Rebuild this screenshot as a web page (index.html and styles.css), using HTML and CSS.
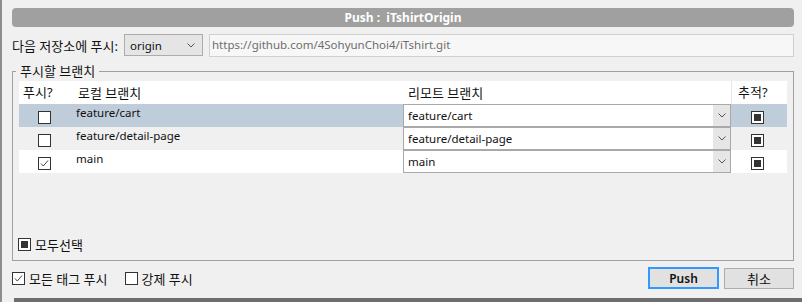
FILE: index.html
```html
<!DOCTYPE html>
<html lang="ko">

<head>
    <meta charset="UTF-8">
    <title>Push</title>
    <link rel="stylesheet" href="styles.css">
</head>

<body>
    <div class="dialog">
        <div class="title-bar">Push :&nbsp; iTshirtOrigin</div>

        <div class="remote-row">
            <span class="remote-label ko">다음 저장소에 푸시:</span>
            <div class="origin-select">
                <span>origin</span>
                <svg class="chevron" width="8" height="5" viewBox="0 0 8 5"><path d="M0.5 0.5 L4 4 L7.5 0.5" fill="none" stroke="#555" stroke-width="1"/></svg>
            </div>
            <div class="url-box">https://github.com/4SohyunChoi4/iTshirt.git</div>
        </div>

        <fieldset class="branches">
            <legend class="ko">푸시할 브랜치</legend>
            <div class="branch-table">
                <div class="branch-row head">
                    <div class="cell push-col ko">푸시?</div>
                    <div class="cell local-col ko">로컬 브랜치</div>
                    <div class="cell remote-col ko">리모트 브랜치</div>
                    <div class="cell track-col ko">추적?</div>
                </div>
                <div class="branch-row selected">
                    <div class="cell push-col"><span class="box"></span></div>
                    <div class="cell local-col">feature/cart</div>
                    <div class="cell remote-col">
                        <div class="combo"><span class="combo-text">feature/cart</span><span class="combo-btn"><svg width="8" height="5" viewBox="0 0 8 5"><path d="M0.5 0.5 L4 4 L7.5 0.5" fill="none" stroke="#555" stroke-width="1"/></svg></span></div>
                    </div>
                    <div class="cell track-col"><span class="box mixed"></span></div>
                </div>
                <div class="branch-row">
                    <div class="cell push-col"><span class="box"></span></div>
                    <div class="cell local-col">feature/detail-page</div>
                    <div class="cell remote-col">
                        <div class="combo"><span class="combo-text">feature/detail-page</span><span class="combo-btn"><svg width="8" height="5" viewBox="0 0 8 5"><path d="M0.5 0.5 L4 4 L7.5 0.5" fill="none" stroke="#555" stroke-width="1"/></svg></span></div>
                    </div>
                    <div class="cell track-col"><span class="box mixed"></span></div>
                </div>
                <div class="branch-row white">
                    <div class="cell push-col"><span class="box"><svg width="11" height="11" viewBox="0 0 11 11"><path d="M2 5.5 L4.3 8 L9 2.5" fill="none" stroke="#444" stroke-width="1"/></svg></span></div>
                    <div class="cell local-col">main</div>
                    <div class="cell remote-col">
                        <div class="combo"><span class="combo-text">main</span><span class="combo-btn"><svg width="8" height="5" viewBox="0 0 8 5"><path d="M0.5 0.5 L4 4 L7.5 0.5" fill="none" stroke="#555" stroke-width="1"/></svg></span></div>
                    </div>
                    <div class="cell track-col"><span class="box mixed"></span></div>
                </div>
            </div>
            <label class="select-all"><span class="box mixed"></span><span class="ko">모두선택</span></label>
        </fieldset>

        <div class="footer">
            <div class="options">
                <label class="option"><span class="box"><svg width="11" height="11" viewBox="0 0 11 11"><path d="M2 5.5 L4.3 8 L9 2.5" fill="none" stroke="#444" stroke-width="1"/></svg></span><span class="ko">모든 태그 푸시</span></label>
                <label class="option force"><span class="box"></span><span class="ko">강제 푸시</span></label>
            </div>
            <div class="buttons">
                <button class="btn primary">Push</button>
                <button class="btn ko">취소</button>
            </div>
        </div>
    </div>
    <div class="edge"></div>
</body>

</html>
```

FILE: styles.css
```css
* {
    margin: 0;
    padding: 0;
    box-sizing: border-box;
}

html,
body {
    width: 802px;
    height: 302px;
    overflow: hidden;
}

body {
    display: flex;
    flex-direction: column;
    background-color: #f0f0f0;
    border-left: 2px solid #8d8d8d;
    font-family: "Noto Sans", "Noto Sans CJK KR", sans-serif;
    font-size: 11.5px;
    color: #111;
}

.ko {
    font-size: 13px;
}

.dialog {
    flex: 1;
    display: flex;
    flex-direction: column;
    padding: 8px 8px 8px 10px;
}

.title-bar {
    height: 19px;
    line-height: 19px;
    background: #a0a0a0;
    border-radius: 4px;
    color: #fff;
    font-size: 12px;
    font-weight: bold;
    text-align: center;
}

.remote-row {
    display: flex;
    align-items: center;
    height: 23px;
    margin-top: 7px;
}

.remote-label {
    width: 112px;
}

.origin-select {
    display: flex;
    align-items: center;
    justify-content: space-between;
    width: 79px;
    height: 22px;
    padding: 0 7px 0 5px;
    background: #e5e5e5;
    border: 1px solid #acacac;
    align-self: flex-start;
}

.url-box {
    flex: 1;
    height: 23px;
    margin-left: 6px;
    padding: 2px 0 0 2px;
    background: #f7f7f7;
    border: 1px solid #d0d0d0;
    color: #6d6d6d;
}

.branches {
    flex: 1;
    display: flex;
    flex-direction: column;
    margin-top: 6px;
    padding: 2px 6px 8px 6px;
    border: 1px solid #a0a0a0;
}

.branches legend {
    margin-left: -3px;
    padding: 0 4px;
    line-height: 16px;
}

.branch-row {
    display: grid;
    grid-template-columns: 51px 332px 329px 56px;
    height: 23px;
}

.branch-row.head {
    background: #fff;
}

.branch-row.head .cell {
    display: flex;
    align-items: center;
}

.branch-row.head .push-col {
    padding-left: 4px;
    justify-content: flex-start;
}

.branch-row.head .local-col {
    padding-left: 8px;
    padding-top: 0;
}

.branch-row.head .remote-col {
    padding-left: 6px;
}

.branch-row.head .track-col {
    padding-left: 6px;
    border-left: 1px solid #e6e6e6;
}

.branch-row.selected {
    background: #bfcddb;
}

.branch-row.white {
    background: #fff;
}

.push-col {
    display: flex;
    justify-content: center;
    align-items: flex-end;
    padding-bottom: 3px;
}

.local-col {
    padding: 1px 0 0 6px;
    line-height: 16px;
}

.remote-col {
    padding-left: 1px;
}

.combo {
    display: flex;
    height: 23px;
    background: #fff;
    border: 1px solid #a9a9a9;
}

.combo-text {
    flex: 1;
    display: flex;
    align-items: center;
    padding-left: 4px;
}

.combo-btn {
    display: flex;
    align-items: center;
    justify-content: center;
    width: 17px;
    background: #e6e6e6;
}

.track-col {
    display: flex;
    align-items: flex-end;
    padding: 0 0 3px 20px;
}

.box {
    display: inline-flex;
    align-items: center;
    justify-content: center;
    width: 13px;
    height: 13px;
    background: #fff;
    border: 1px solid #333;
    flex-shrink: 0;
}

.box.mixed::after {
    content: "";
    width: 7px;
    height: 7px;
    background: #333;
}

.select-all {
    display: flex;
    align-items: center;
    gap: 4px;
    height: 16px;
    margin: auto 0 0 -1px;
}

.footer {
    display: flex;
    justify-content: space-between;
    height: 24px;
    margin-top: 5px;
}

.options {
    display: flex;
    align-items: center;
}

.option {
    display: flex;
    align-items: center;
    gap: 4px;
}

.option.force {
    margin-left: 17px;
}

.buttons {
    display: flex;
    align-items: flex-end;
    gap: 5px;
    padding-bottom: 1px;
}

.btn {
    width: 70px;
    height: 21px;
    background: #e1e1e1;
    border: 1px solid #adadad;
    font-family: "Noto Sans", "Noto Sans CJK KR", sans-serif;
    font-size: 12px;
    color: #111;
}

.btn.ko {
    font-size: 13px;
}

.btn.primary {
    width: 71px;
    height: 22px;
    border: 2px solid #3399ff;
    font-weight: 600;
}

.edge {
    height: 4px;
    margin-left: 12px;
    background: #6e6e6e;
}
```
